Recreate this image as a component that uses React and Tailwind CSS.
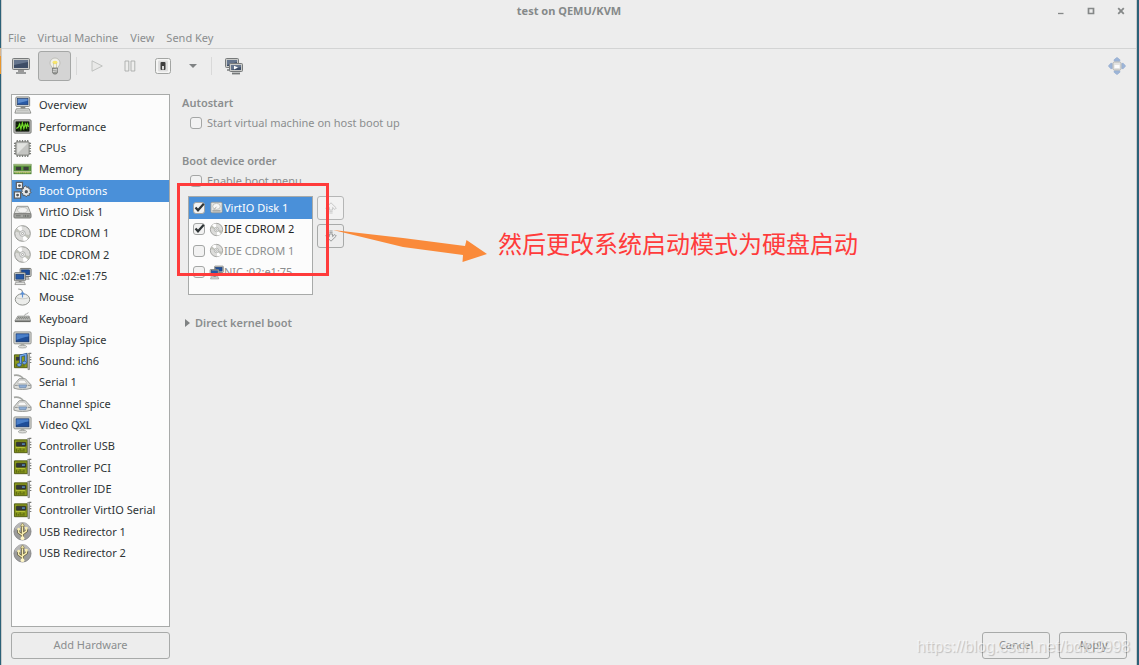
import React from "react";

function Svg({ children, className = "h-5 w-5", viewBox = "0 0 20 20" }) {
  return (
    <svg viewBox={viewBox} className={`shrink-0 ${className}`} aria-hidden="true">
      {children}
    </svg>
  );
}

const Monitor = () => (
  <>
    <rect x="1" y="1" width="18" height="12.5" rx="1" fill="#dfe0dc" stroke="#8a8c88" strokeWidth="1" />
    <rect x="3.2" y="3" width="13.6" height="8.4" fill="#1f4e99" stroke="#153468" strokeWidth=".8" />
    <path d="M3.6 3.4h12.8v2.4C12 6.400 7 8 3.600 9.400z" fill="#4a7fc9" />
    <path d="M8 13.500h4v2H8z" fill="#a9aba7" />
    <ellipse cx="10" cy="16.500" rx="4.500" ry="1.400" fill="#dcddda" stroke="#90928e" strokeWidth=".7" />
  </>
);

const Computer = () => (
  <>
    <rect x="3" y="1" width="14.5" height="10" rx="1" fill="#dcddda" stroke="#7e807c" />
    <rect x="4.8" y="2.8" width="11" height="6.4" fill="#2a5aa5" stroke="#18396f" strokeWidth=".7" />
    <path d="M5.2 3.2h10.2v1.8L5.2 7.6z" fill="#5c8ccf" />
    <path d="M8 11.3h5v2H8z" fill="#888a85" />
    <path d="M3.5 13.5h13.5l1.8 4.5H2z" fill="#eeeeec" stroke="#7e807c" strokeWidth=".9" />
    <path d="M4 15.2h12.5M3.5 16.7h13.8" stroke="#a5a7a3" strokeWidth=".7" />
  </>
);

const Performance = () => (
  <>
    <rect x="1" y="3" width="18" height="14" rx="1" fill="#c9cac6" stroke="#6f716d" />
    <rect x="3" y="5" width="14" height="10" fill="#0c1b06" stroke="#222" strokeWidth=".7" />
    <path d="M6 5v10M9 5v10M12 5v10M15 5v10M3 8h14M3 12h14" stroke="#244a12" strokeWidth=".5" />
    <path d="M3.5 12l2.2-1.5 1.3-3 1.3 5 1.6-6 1.5 5.5 1.6-4.5 1.2 3.5 1-3.5 1.3 3" fill="none" stroke="#73d92c" strokeWidth="1.3" />
  </>
);

const Cpu = () => (
  <>
    <path d="M4.5 1v18M7.2 1v18M10 1v18M12.8 1v18M15.5 1v18M1 4.5h18M1 7.2h18M1 10h18M1 12.8h18M1 15.5h18" stroke="#777975" strokeWidth="1.3" />
    <rect x="3" y="3" width="14" height="14" rx="1" fill="#c4c5c2" stroke="#777975" />
    <path d="M4.5 4.5h11l-11 11z" fill="#e2e3e0" />
  </>
);

const Memory = () => (
  <>
    <rect x="1" y="4.5" width="18" height="10" fill="#5c9a3c" stroke="#447a2b" strokeWidth=".8" />
    <path d="M1 5.200h18M1 12.400h18" stroke="#b3c190" strokeWidth="1.400" />
    <path d="M3 7h5.5v3.8H3zM11 7h5.5v3.8H11z" fill="#3a3f3a" />
    <path d="M3.2 14v-1.4M5 14v-1.4M6.8 14v-1.4M8.6 14v-1.4M11.4 14v-1.4M13.2 14v-1.4M15 14v-1.4M16.8 14v-1.4" stroke="#d8cb65" strokeWidth=".8" />
  </>
);

const gear = "M13.500 5l1 1.800 2-.6.2 2 2.100.6-1 1.800 1.300 1.700-2 .9.100 2.100-2-.3-1.300 1.700-1.300-1.700-2 .5-.2-2.100-1.800-.9 1.200-1.700-1-1.900 2-.5.4-2z";

const BootGears = () => (
  <>
    <path d="M3.500 1.500h6.500V8H3.500z" fill="#f4f5f6" stroke="#5b6065" strokeWidth="1.300" />
    <path d="M1.500 11.500H8V18H1.500z" fill="#f4f5f6" stroke="#5b6065" strokeWidth="1.300" />
    <path d={gear} fill="#e6e8ea" stroke="#53585d" />
    <circle cx="14" cy="11.2" r="1.7" fill="#4f5459" />
    <circle cx="6.800" cy="4.800" r="1.500" fill="#4f5459" />
    <circle cx="4.800" cy="14.800" r="1.500" fill="#4f5459" />
  </>
);

const Disk = () => (
  <>
    <path d="M4.3 3.500h11.400l3.300 8H1z" fill="#dfe0dd" stroke="#8b8d89" strokeWidth=".9" />
    <ellipse cx="10" cy="7.500" rx="5.200" ry="2.800" fill="#f3f3f2" stroke="#b9bab7" strokeWidth=".8" />
    <rect x="1" y="11.3" width="18" height="4.5" rx="1" fill="#a4a6a2" stroke="#6d6f6b" strokeWidth=".9" />
    <path d="M3 13.500h5M11.500 12.500v2.200M13.200 12.500v2.200M15 12.500v2.200M16.700 12.500v2.200" stroke="#5e605c" strokeWidth=".8" />
  </>
);

const Disc = () => (
  <>
    <circle cx="10" cy="10" r="8.2" fill="#dcdcda" stroke="#8c8e8a" />
    <path d="M10 10L4 4.5A8 8 0 0 1 9 2zM10 10l6 5.5a8 8 0 0 1-5 2.5z" fill="#fff" />
    <path d="M10 10L2.4 8A8 8 0 0 1 4 4.6zM10 10l7.7 1.8a8 8 0 0 1-1.8 3.7z" fill="#c0c2ba" />
    <circle cx="10" cy="10" r="3" fill="#eee" stroke="#a6a8a4" strokeWidth=".9" />
    <circle cx="10" cy="10" r="1.1" fill="#fff" stroke="#888a85" strokeWidth=".7" />
  </>
);

const Network = () => (
  <>
    <rect x="7.5" y="1.5" width="11.5" height="8.5" rx=".8" fill="#dcddda" stroke="#6e706c" />
    <rect x="9" y="3" width="8.5" height="5.2" fill="#1f4e99" stroke="#12305f" strokeWidth=".6" />
    <path d="M12 10.5h4l1 2.5h-6z" fill="#c6c7c4" stroke="#777" strokeWidth=".6" />
    <rect x="1.5" y="6" width="11.5" height="8.5" rx=".8" fill="#dcddda" stroke="#6e706c" />
    <rect x="3" y="7.6" width="8.5" height="5.2" fill="#2558a6" stroke="#12305f" strokeWidth=".6" />
    <path d="M6 14.8h3v1.2H6z" fill="#888" />
    <path d="M3 16h9l1 2.5H2z" fill="#e6e7e4" stroke="#777" strokeWidth=".7" />
  </>
);

const MouseIcon = () => (
  <>
    <path d="M5.500 1c4 .2 4.500 1.700 4.500 5" fill="none" stroke="#8c8e8a" strokeWidth="1.100" />
    <ellipse cx="10" cy="12" rx="7.6" ry="6" fill="#ecedeb" stroke="#8a8c88" />
    <path d="M3.5 10.2c4 1.6 9 1.6 13 0" fill="none" stroke="#bcbdba" strokeWidth=".8" />
    <path d="M10 4.5v5.5M8 7l2-2.5L12 7" fill="none" stroke="#5b8fd4" strokeWidth="1.2" />
  </>
);

const KeyboardIcon = () => (
  <>
    <path d="M12 7c0-2.5 4-1 4-3.5" fill="none" stroke="#9fa19d" strokeWidth=".9" />
    <path d="M5 7.5h12l1.500 5H2z" fill="#c8c9c6" stroke="#858783" strokeWidth=".8" />
    <path d="M5.200 8.800h11.500M4.200 10.300h13" stroke="#767874" strokeWidth="1" strokeDasharray="1.600 .5" />
    <path d="M2 12.300h16.500v1.500H2z" fill="#6b6d69" />
  </>
);

const cardBody = (
  <>
    <path d="M1.500 3h13.500v13.500H1.500z" fill="#8b9a1d" stroke="#4e5a10" />
    <path d="M3.500 15.500v-3M5.500 15.500v-2M7.500 15.500v-3.500M9.500 15.500v-2M11.500 15.500v-3" stroke="#4c590e" strokeWidth=".9" />
    <path d="M15.500 1.500h1.800V18.500H15.800z" fill="#c9cac7" stroke="#787a76" strokeWidth=".8" />
    <path d="M17 1.500h2.300M17.600 5.500h1.700M17.600 8h1.700M17.600 11h1.700" stroke="#787a76" strokeWidth="1.200" />
  </>
);

const Card = () => (
  <>
    {cardBody}
    <rect x="3.5" y="5.5" width="10" height="4.2" rx=".6" fill="#34383a" stroke="#202324" strokeWidth=".6" />
    <path d="M9.500 6.700h3v1.500h-3z" fill="#5a93c7" />
    <path d="M3 11h9.500" stroke="#c2cc3e" strokeWidth=".9" />
  </>
);

const Sound = () => (
  <>
    {cardBody}
    <rect x="3" y="5" width="5" height="4" fill="#34383a" />
    <path d="M8 13V4l5.500-1.500V11" fill="none" stroke="#274f8a" strokeWidth="2.800" />
    <path d="M8 13V4l5.500-1.500V11" fill="none" stroke="#73a8e8" strokeWidth="1.500" />
    <ellipse cx="6.500" cy="13.500" rx="2.300" ry="1.800" fill="#73a8e8" stroke="#274f8a" strokeWidth=".7" />
    <ellipse cx="12" cy="11.300" rx="2.100" ry="1.600" fill="#73a8e8" stroke="#274f8a" strokeWidth=".7" />
  </>
);

const Serial = () => (
  <>
    <path d="M1 2.500c5-1 7.500.5 10 3.500" fill="none" stroke="#a5a7a3" strokeWidth="1.700" />
    <path d="M6.500 6h6.500l6 6.500V16c-5 1.800-13 1.800-18 0v-3.500z" fill="#dcddda" stroke="#8a8c88" strokeWidth=".9" />
    <path d="M7 7.500h5l2.800 3.500H4.500z" fill="#f8f8f7" stroke="#b7b8b5" strokeWidth=".7" />
    <path d="M6 12.500h8.500l-1 3H7z" fill="#8faed6" stroke="#66809f" strokeWidth=".7" />
    <path d="M2 13h3M15.500 13h3" stroke="#777975" strokeWidth=".8" />
  </>
);

const Usb = () => (
  <>
    <circle cx="10" cy="10" r="9" fill="#9b9b9b" stroke="#7b7b7b" strokeWidth=".8" />
    <path d="M2 8a8 8 0 0 1 16 0c-4-2-12-2-16 0z" fill="#b7b7b7" />
    <path d="M10 17V3.5M10 14l-4-3V8M10 12.5l4-3V7" fill="none" stroke="#5a5331" strokeWidth="2.8" />
    <path d="M10 17V3.5M10 14l-4-3V8M10 12.5l4-3V7" fill="none" stroke="#f8edb0" strokeWidth="1.5" />
    <path d="M10 1l2.2 3.5H7.8z" fill="#f8edb0" stroke="#6d6436" strokeWidth=".5" />
    <circle cx="10" cy="17" r="2" fill="#fff6c5" />
    <circle cx="6" cy="7.5" r="1.5" fill="#f8edb0" />
    <path d="M12.6 5.2h2.8V8h-2.8z" fill="#f8edb0" />
  </>
);

const hardware = [
  ["Overview", Computer],
  ["Performance", Performance],
  ["CPUs", Cpu],
  ["Memory", Memory],
  ["Boot Options", BootGears],
  ["VirtIO Disk 1", Disk],
  ["IDE CDROM 1", Disc],
  ["IDE CDROM 2", Disc],
  ["NIC :02:e1:75", Network],
  ["Mouse", MouseIcon],
  ["Keyboard", KeyboardIcon],
  ["Display Spice", Monitor],
  ["Sound: ich6", Sound],
  ["Serial 1", Serial],
  ["Channel spice", Serial],
  ["Video QXL", Monitor],
  ["Controller USB", Card],
  ["Controller PCI", Card],
  ["Controller IDE", Card],
  ["Controller VirtIO Serial", Card],
  ["USB Redirector 1", Usb],
  ["USB Redirector 2", Usb],
];

const DiskSmall = () => (
  <>
    <rect x="2.5" y="3" width="15" height="14" rx="1.5" fill="#e3e4e1" stroke="#8d8f8b" />
    <ellipse cx="10" cy="8.500" rx="5" ry="4" fill="#f7f7f6" stroke="#b3b5b1" />
    <path d="M4.500 14.500h11" stroke="#9b9d99" strokeWidth="1.800" />
    <path d="M10 9l-3.500 4" stroke="#a3a5a1" strokeWidth="1.200" />
  </>
);

const bootDevices = [
  { label: "VirtIO Disk 1", icon: DiskSmall, checked: true, row: "bg-[#4a90d9] text-white" },
  { label: "IDE CDROM 2", icon: Disc, checked: true, row: "text-[#1f2426]" },
  { label: "IDE CDROM 1", icon: Disc, checked: false, row: "text-[#8b8e8f]" },
  { label: "NIC :02:e1:75", icon: Network, checked: false, row: "text-[#8b8e8f]" },
];

function Check({ id, checked = false }) {
  return (
    <span className="relative flex h-3 w-3 shrink-0">
      <input
        id={id}
        type="checkbox"
        defaultChecked={checked}
        className="peer h-3 w-3 appearance-none rounded-[3px] border border-[#a4a6a5] bg-[#f2f2f2]"
      />
      <svg viewBox="0 0 12 12" className="pointer-events-none absolute inset-0 hidden h-3 w-3 overflow-visible peer-checked:block" aria-hidden="true">
        <path d="M2.5 5.5L5 8.3 10.8 1.8" fill="none" stroke="#2e3436" strokeWidth="2.2" />
      </svg>
    </span>
  );
}

function TitleBar() {
  return (
    <header className="relative flex h-[22px] items-center justify-end">
      <h1 className="absolute inset-x-0 text-center text-[11px] font-bold text-[#858989]">test on QEMU/KVM</h1>
      <div className="relative flex gap-3 pr-1.5 text-[#858888]">
        <button aria-label="Minimize" className="flex h-[18px] w-[18px] items-center justify-center">
          <Svg viewBox="0 0 8 8" className="h-2 w-2"><path d="M1 6.500h5.500" stroke="currentColor" strokeWidth="1.300" /></Svg>
        </button>
        <button aria-label="Maximize" className="flex h-[18px] w-[18px] items-center justify-center">
          <Svg viewBox="0 0 8 8" className="h-2 w-2"><path d="M1.500 1.500h5v5h-5z" fill="none" stroke="currentColor" strokeWidth="1.700" /></Svg>
        </button>
        <button aria-label="Close" className="flex h-[18px] w-[18px] items-center justify-center">
          <Svg viewBox="0 0 8 8" className="h-2 w-2"><path d="M1.2 1.2l5.6 5.6M6.8 1.2L1.2 6.8" stroke="currentColor" strokeWidth="1.8" /></Svg>
        </button>
      </div>
    </header>
  );
}

const Screen = ({ x = 0, y = 0, w = 17, h = 12 }) => (
  <>
    <rect x={x + 0.5} y={y + 0.5} width={w - 1} height={h - 1} rx="1" fill="#c9cac8" stroke="#777a7b" />
    <rect x={x + 2} y={y + 2} width={w - 4} height={h - 4} fill="#3d4d66" />
    <path d={`M${x + 2} ${y + 2}h${w - 4}v2l-${w - 4} 3z`} fill="#65758d" />
  </>
);

function Toolbar() {
  return (
    <div className="flex h-[34px] items-center pl-[7px]">
      <button aria-label="Show the graphical console" className="flex h-[30px] w-6 items-center justify-center">
        <Svg viewBox="0 0 18 16" className="h-4 w-[18px]">
          <Screen w={18} h={12} />
          <path d="M6 12h6v2H6z" fill="#999" />
          <path d="M4 15h10" stroke="#7d7f80" strokeWidth="1.5" />
        </Svg>
      </button>
      <button aria-label="Show virtual hardware details" className="ml-[5px] flex h-[30px] w-[33px] items-center justify-center rounded-[3px] border border-[#a5a7a6] bg-[#d4d4d4]">
        <Svg viewBox="0 0 16 18" className="h-[18px] w-4">
          <path d="M8 1a5 5 0 0 0-5 5c0 2.200 1.800 3.200 2.500 5.500h5C11.200 9.200 13 8.200 13 6a5 5 0 0 0-5-5z" fill="#f0f0ea" stroke="#b5b5ae" strokeWidth=".8" />
          <ellipse cx="8" cy="5.500" rx="2.600" ry="1.800" fill="#f7e56b" />
          <path d="M6.500 6v5M9.500 6v5" stroke="#c8c2a0" strokeWidth=".7" />
          <path d="M5.500 11h5v4.500l-1.200 1.500H6.700L5.500 15.500z" fill="#989a97" stroke="#727471" strokeWidth=".8" />
          <path d="M5.800 12.800l4.500-.6M5.800 14.500l4.500-.6" stroke="#e6e6e4" strokeWidth=".8" />
        </Svg>
      </button>
      <span className="ml-[5px] h-[18px] w-px bg-[#d9d9d9]" />
      <button aria-label="Run" className="ml-2 flex h-[30px] w-6 items-center justify-center">
        <Svg viewBox="0 0 12 12" className="h-3 w-3"><path d="M1 .8L11.300 6 1 11.200z" fill="#e9e9e8" stroke="#bbbdbb" strokeWidth=".9" /></Svg>
      </button>
      <button aria-label="Pause" className="ml-[9px] flex h-[30px] w-6 items-center justify-center">
        <Svg viewBox="0 0 12 12" className="h-3 w-3"><path d="M1 1h3.800v10H1zM7 1h3.800v10H7z" fill="#eeeeed" stroke="#a9abaa" strokeWidth=".9" /></Svg>
      </button>
      <button aria-label="Shut down" className="ml-[9px] flex h-[30px] w-6 items-center justify-center">
        <Svg viewBox="0 0 16 16" className="h-4 w-4">
          <rect x=".5" y=".5" width="15" height="15" rx="2" fill="#f5f5f4" stroke="#a3a5a3" />
          <rect x="3" y="2.500" width="10" height="11" rx="1" fill="#dedede" />
          <rect x="5.500" y="4" width="5" height="8" rx="1" fill="#3e3e3e" />
          <rect x="7" y="8" width="2" height="3.500" fill="#d9d9d9" />
        </Svg>
      </button>
      <button aria-label="Shut down options" className="ml-2 flex h-[30px] w-5 items-center justify-center">
        <Svg viewBox="0 0 8 4" className="h-1 w-2"><path d="M0 0h8L4 4z" fill="#7f8283" /></Svg>
      </button>
      <span className="ml-2 h-[18px] w-px bg-[#d9d9d9]" />
      <button aria-label="Manage snapshots" className="ml-[10px] flex h-[30px] w-6 items-center justify-center">
        <Svg viewBox="0 0 18 17" className="h-[17px] w-[18px]">
          <Screen w={14} h={10} />
          <path d="M2 12h4" stroke="#777a7b" strokeWidth="1.500" />
          <Screen x={4} y={5} w={14} h={9} />
          <path d="M9 7.800l4 1.800-4 1.800z" fill="#fff" />
          <path d="M7 15.500h8" stroke="#777a7b" strokeWidth="1.800" />
        </Svg>
      </button>
      <button aria-label="Fullscreen" className="ml-auto mr-[10px] flex h-[30px] w-[18px] items-center justify-center">
        <Svg viewBox="0 0 18 18" className="h-[18px] w-[18px]">
          <path d="M9 .5l2.800 2.200v1.500H6.200V2.700zM9 17.500l2.800-2.200v-1.500H6.200v1.500zM.5 9l2.200-2.600h1.500v5.200H2.700zM17.500 9l-2.200-2.600h-1.500v5.200h1.500z" fill="#9db5d8" stroke="#93acd0" strokeWidth=".8" strokeLinejoin="round" />
          <rect x="5" y="5" width="8" height="8" rx="1.5" fill="#e3e3e1" stroke="#b6b7b5" />
          <rect x="6.500" y="8" width="5" height="3" fill="#fcfcfc" />
        </Svg>
      </button>
    </div>
  );
}

function Sidebar() {
  return (
    <aside className="flex w-[159px] shrink-0 flex-col gap-[5px]">
      <div className="flex-1 border border-[#a8aaa9] bg-[#fcfcfc]">
        <ul className="flex h-[469px] flex-col">
          {hardware.map(([label, Icon]) => (
            <li key={label} className="flex min-h-0 flex-1">
              <button
                className={
                  label === "Boot Options"
                    ? "flex w-full items-center gap-[7px] bg-[#4a90d9] pl-px text-white"
                    : "flex w-full items-center gap-[7px] pl-px text-[#2e3436]"
                }
              >
                <Svg className="h-[19px] w-[19px]"><Icon /></Svg>
                <span>{label}</span>
              </button>
            </li>
          ))}
        </ul>
      </div>
      <button className="h-[27px] rounded-[3px] border border-[#a8aaa9] text-[#8b8e8f]">Add Hardware</button>
    </aside>
  );
}

function MoveIcon({ down = false }) {
  return (
    <Svg viewBox="0 0 12 12" className={down ? "h-3 w-3 rotate-180 text-[#909292]" : "h-3 w-3 text-[#c3c4c4]"}>
      <path d="M6 .8L11.300 6 9.800 7.500 7.600 5.400V8H4.400V5.400L2.200 7.500.7 6zM4.400 9.300h3.200M4.400 11h3.200" fill="none" stroke="currentColor" strokeWidth=".9" />
    </Svg>
  );
}

function BootOptions() {
  return (
    <section className="relative flex min-w-0 flex-1 flex-col text-[#8b8e8f]">
      <h2 className="h-[18px] pl-px font-semibold leading-[18px]">Autostart</h2>
      <label htmlFor="autostart" className="mt-0.5 ml-[9px] flex h-[18px] items-center gap-[5px]">
        <Check id="autostart" />
        Start virtual machine on host boot up
      </label>

      <h2 className="mt-5 h-[18px] pl-px font-semibold leading-[18px]">Boot device order</h2>
      <label htmlFor="bootmenu" className="mt-0.5 ml-[9px] flex h-[18px] items-center gap-[5px]">
        <Check id="bootmenu" />
        Enable boot menu
      </label>

      <div className="mt-1.5 ml-[7px] flex gap-1">
        <div className="h-[99px] w-[125px] border border-[#a8aaa9] bg-[#fcfcfc]">
          <ul className="flex h-[86px] flex-col">
            {bootDevices.map(({ label, icon: Icon, checked, row }, i) => (
              <li key={label} className={`flex flex-1 ${row}`}>
                <label htmlFor={`boot-${i}`} className="flex items-center pl-1">
                  <Check id={`boot-${i}`} checked={checked} />
                  <Svg className="ml-1 h-[15px] w-[15px]"><Icon /></Svg>
                  <span>{label}</span>
                </label>
              </li>
            ))}
          </ul>
        </div>
        <div className="flex flex-col gap-1">
          <button aria-label="Move up" className="flex h-6 w-[27px] items-center justify-center rounded-[3px] border border-[#b5b6b6] bg-[#f2f2f2]">
            <MoveIcon />
          </button>
          <button aria-label="Move down" className="flex h-6 w-[27px] items-center justify-center rounded-[3px] border border-[#a8aaa9]">
            <MoveIcon down />
          </button>
        </div>
      </div>

      <button className="mt-[19px] ml-1 flex h-[18px] items-center gap-[5px] self-start font-semibold">
        <Svg viewBox="0 0 5 8" className="h-2 w-[5px]"><path d="M0 0l5 4-5 4z" fill="#7f8283" /></Svg>
        Direct kernel boot
      </button>

      <div className="mt-auto mr-[9px] flex justify-end gap-[9px]">
        <button className="h-[27px] w-[68px] rounded-[3px] border border-[#a8aaa9]">Cancel</button>
        <button className="h-[27px] w-[68px] rounded-[3px] border border-[#a8aaa9]">Apply</button>
      </div>

      <div className="pointer-events-none absolute -top-px left-0">
        <div className="absolute top-[90px] -left-1 h-[93px] w-[152px] border-[3px] border-[#ff3b3b]" />
        <svg viewBox="0 0 154 34" className="absolute top-[137px] left-[152px] h-[34px] w-[154px]" aria-hidden="true">
          <path d="M0 0L70 8l62 8 1.500-6 20.500 14-24.500 8 .5-7-60-8z" fill="#fa8a3a" />
        </svg>
        <p className="absolute top-[134px] left-[317px] whitespace-nowrap font-['Noto_Sans_CJK_SC',sans-serif] text-[24px] leading-8 text-[#ff3b3b]">
          然后更改系统启动模式为硬盘启动
        </p>
      </div>
    </section>
  );
}

export default function App() {
  return (
    <div className="flex min-h-screen bg-[#2b6178] pr-0.5 font-['Noto_Sans',sans-serif] text-[11px]">
      <div className="w-px pt-12">
        <div className="h-2 bg-[#d9b48a]" />
        <div className="h-[18px] bg-[#e8962e]" />
      </div>
      <div className="relative flex min-w-0 flex-1 flex-col border-x border-[#c9cbcb] bg-[#ededed]">
        <TitleBar />
        <nav className="flex h-[27px] items-center gap-3 border-b border-[#d3d4d4] pt-1.5 pl-1.5 text-[#8b8e8f]">
          <button>File</button>
          <button>Virtual Machine</button>
          <button>View</button>
          <button>Send Key</button>
        </nav>
        <Toolbar />
        <main className="flex flex-1 gap-[11px] pt-[11px] pb-1.5 pl-[9px]">
          <Sidebar />
          <BootOptions />
        </main>
        <p className="pointer-events-none absolute right-1.5 bottom-2 font-['Liberation_Sans',sans-serif] text-[16px] leading-5 text-white/60 [text-shadow:1px_1px_1px_#00000033]">
          https://blog.csdn.net/bdld9998
        </p>
      </div>
    </div>
  );
}
